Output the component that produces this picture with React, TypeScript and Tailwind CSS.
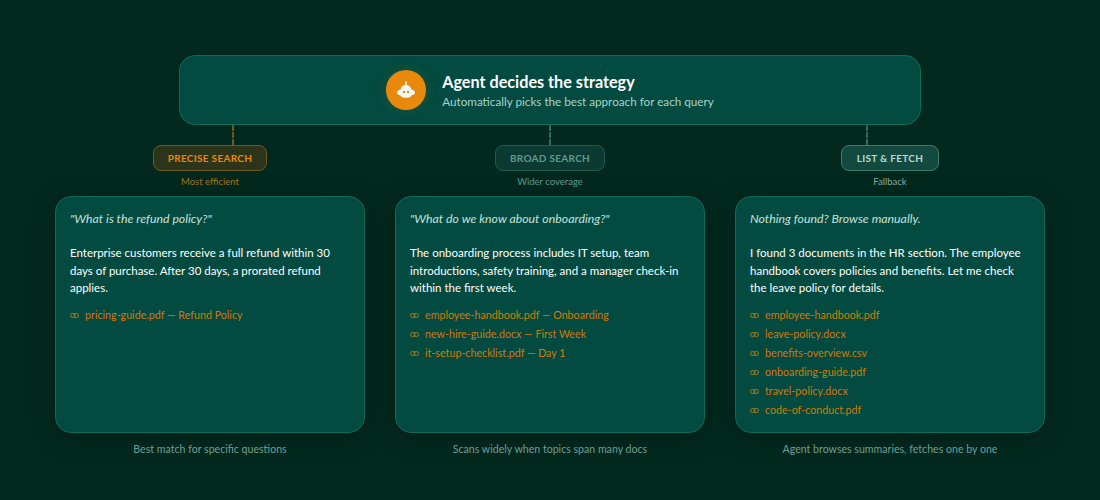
const columns = [
  {
    label: "PRECISE SEARCH",
    hint: "Most efficient",
    badge: "w-[114px] border-[#6b5a1c] bg-[#2c3519] text-[#e8890c]",
    hintColor: "text-[#a0761e]",
    query: "\"What is the refund policy?\"",
    answer: "Enterprise customers receive a full refund within 30 days of purchase. After 30 days, a prorated refund applies.",
    files: ["pricing-guide.pdf — Refund Policy"],
    caption: "Best match for specific questions",
  },
  {
    label: "BROAD SEARCH",
    hint: "Wider coverage",
    badge: "w-[110px] border-[#1f5a4f] bg-[#0b3a32] text-[#5f9c8f]",
    hintColor: "text-[#5f9c8f]",
    query: "\"What do we know about onboarding?\"",
    answer: "The onboarding process includes IT setup, team introductions, safety training, and a manager check-in within the first week.",
    files: ["employee-handbook.pdf — Onboarding", "new-hire-guide.docx — First Week", "it-setup-checklist.pdf — Day 1"],
    caption: "Scans widely when topics span many docs",
  },
  {
    label: "LIST & FETCH",
    hint: "Fallback",
    badge: "w-[98px] border-[#3f7a6e] bg-[#124a40] text-[#b5dcd3]",
    hintColor: "text-[#7fb0a5]",
    query: "Nothing found? Browse manually.",
    answer: "I found 3 documents in the HR section. The employee handbook covers policies and benefits. Let me check the leave policy for details.",
    files: ["employee-handbook.pdf", "leave-policy.docx", "benefits-overview.csv", "onboarding-guide.pdf", "travel-policy.docx", "code-of-conduct.pdf"],
    caption: "Agent browses summaries, fetches one by one",
  },
];

const connectors = ["border-[#6b5a1c]", "border-[#2f6a5e]", "border-[#2f6a5e]"];

const RobotIcon = () => (
  <svg viewBox="0 0 20 20" className="h-5 w-5">
    <rect x="9.2" y="1.5" width="1.6" height="4" fill="#f0f7f5" />
    <path
      d="M10 5 C13 5 15 7 15.5 9.5 C17.5 10 19 11 19 12.5 C19 14 17.5 15 15.5 15.5 C15 17 13 17.8 10 17.8 C7 17.8 5 17 4.5 15.5 C2.5 15 1 14 1 12.5 C1 11 2.5 10 4.5 9.5 C5 7 7 5 10 5Z"
      fill="#f0f7f5"
    />
    <rect x="7" y="11" width="2" height="2" fill="#e8890c" />
    <rect x="11" y="11" width="2" height="2" fill="#e8890c" />
  </svg>
);

const LinkIcon = () => (
  <svg viewBox="0 0 9 5" className="h-[5px] w-[9px] shrink-0" fill="none" stroke="#b8801a" strokeWidth="0.9">
    <rect x="0.5" y="0.5" width="4.6" height="4" rx="2" />
    <rect x="3.9" y="0.5" width="4.6" height="4" rx="2" />
  </svg>
);

const App = () => {
  return (
    <div className="h-[500px] w-[1100px] overflow-hidden bg-[#03291f] pt-[55px] font-['Lato',sans-serif]">
      <div className="mx-auto flex h-[70px] w-[742px] items-center justify-center gap-[16px] rounded-[16px] border border-[#0d6b5c] bg-[#034a40]">
        <div className="flex h-10 w-10 items-center justify-center rounded-full bg-[#e8890c] shadow-[0_0_14px_rgba(232,137,12,0.15)]">
          <RobotIcon />
        </div>
        <div>
          <div className="text-[16.2px] leading-[22px] font-bold text-white">Agent decides the strategy</div>
          <div className="text-[11.7px] leading-[17px] text-[#a9d3c9]">Automatically picks the best approach for each query</div>
        </div>
      </div>

      <div className="mx-auto flex h-[20px] w-[636px] justify-between">
        {connectors.map((line, i) => (
          <div key={i} className={`h-full border-l-2 border-dashed ${line}`} />
        ))}
      </div>

      <div className="mx-auto flex w-[990px] justify-between">
        {columns.map((col) => (
          <div key={col.label} className="flex w-[310px] flex-col items-center">
            <div className={`flex h-[26px] items-center justify-center rounded-[8px] border text-[10px] font-bold tracking-[0.3px] ${col.badge}`}>
              {col.label}
            </div>
            <div className={`mt-[4px] text-[9.5px] leading-[14px] ${col.hintColor}`}>{col.hint}</div>

            <div className="mt-[7px] h-[237px] w-full rounded-[16px] border border-[#0d6b5c] bg-[#034a40] px-[14px] pt-[12px] shadow-[0_4px_24px_rgba(0,0,0,0.3)]">
              <div className="text-[12.3px] leading-[19px] text-[#c5e3dc] italic">{col.query}</div>
              <div className="mt-[16px] text-[11.5px] leading-[17.6px] text-white">{col.answer}</div>
              <div className="mt-[9px]">
                {col.files.map((file) => (
                  <div key={file} className="flex h-[19px] items-center gap-[6px] text-[10.7px] text-[#cf7a0b]">
                    <LinkIcon />
                    <span>{file}</span>
                  </div>
                ))}
              </div>
            </div>

            <div className="mt-[9px] text-[10.6px] leading-[14px] text-[#6f9f94]">{col.caption}</div>
          </div>
        ))}
      </div>
    </div>
  );
};

export default App;
